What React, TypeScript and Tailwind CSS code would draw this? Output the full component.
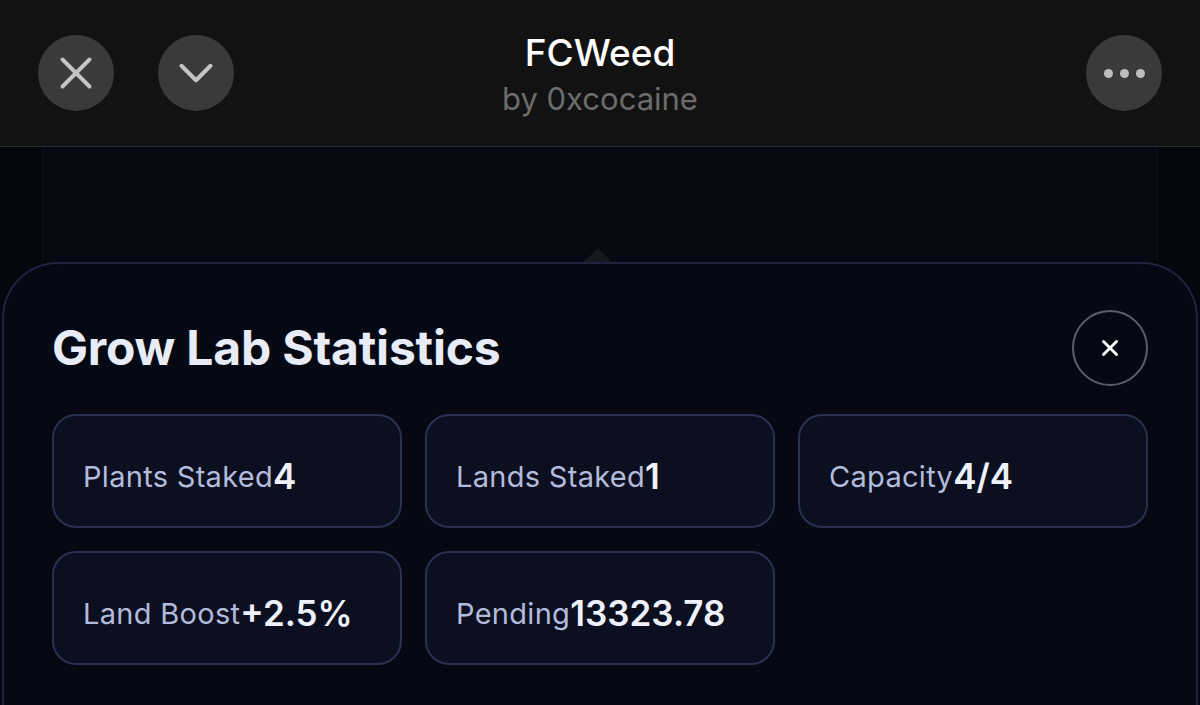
import { X, ChevronDown } from 'lucide-react';

const stats = [
  { label: 'Plants Staked', value: '4' },
  { label: 'Lands Staked', value: '1' },
  { label: 'Capacity', value: '4/4' },
  { label: 'Land Boost', value: '+2.5%' },
  { label: 'Pending', value: '13323.78' },
];

export default function App() {
  return (
    <div
      className="w-[1200px] h-[705px] overflow-hidden bg-[#05070e] flex flex-col"
      style={{ fontFamily: 'Inter, "Noto Sans", sans-serif' }}
    >
      {/* top bar */}
      <div className="h-[147px] shrink-0 bg-[#121212] border-b border-[#2a2b30] flex items-center px-[38px]">
        <div className="flex items-center gap-[44px] w-[300px]">
          <button className="w-[76px] h-[76px] rounded-full bg-[#3a3a3a] flex items-center justify-center text-[#c4c4c4]">
            <X size={54} strokeWidth={1.75} />
          </button>
          <button className="w-[76px] h-[76px] rounded-full bg-[#3a3a3a] flex items-center justify-center text-[#c4c4c4]">
            <ChevronDown size={58} strokeWidth={1.65} />
          </button>
        </div>
        <div className="flex-1 flex flex-col items-center leading-none">
          <div className="text-white text-[37px] font-medium mt-[2px]">FCWeed</div>
          <div className="text-[#6c6c6c] text-[31px] mt-[12px]">by 0xcocaine</div>
        </div>
        <div className="w-[300px] flex justify-end">
          <button className="w-[76px] h-[76px] rounded-full bg-[#3a3a3a] flex items-center justify-center gap-[7px]">
            <span className="w-[9px] h-[9px] rounded-full bg-[#bdbdbd]" />
            <span className="w-[9px] h-[9px] rounded-full bg-[#bdbdbd]" />
            <span className="w-[9px] h-[9px] rounded-full bg-[#bdbdbd]" />
          </button>
        </div>
      </div>

      {/* backdrop area */}
      <div className="h-[115px] shrink-0 px-[42px] flex">
        <div className="flex-1 bg-[#070a13] border-x border-[#0e111b] flex items-end justify-center">
          <div className="w-0 h-0 border-x-[14px] border-x-transparent border-b-[14px] border-b-[#16181f] mr-[4px]" />
        </div>
      </div>

      {/* stats sheet */}
      <div className="flex-1 mx-[2px] rounded-t-[56px] border-t-2 border-x-2 border-[#1e2440] bg-[#060914] px-[48px] pt-[46px]">
        <div className="flex items-center justify-between">
          <h1 className="text-[48px] font-bold text-[#e7ecf8] tracking-[-0.2px] leading-none">
            Grow Lab Statistics
          </h1>
          <button className="w-[76px] h-[76px] rounded-full border-2 border-[#5b5e68] flex items-center justify-center text-white">
            <X size={26} strokeWidth={2.6} />
          </button>
        </div>

        <div className="grid grid-cols-3 gap-x-[23px] gap-y-[23px] mt-[28px]">
          {stats.map(s => (
            <div
              key={s.label}
              className="h-[114px] rounded-[24px] border-2 border-[#2a3150] bg-[#0b0f1f] flex items-center px-[29px] pt-[10px]"
            >
              <span className="text-[29px] text-[#b3bbdc] tracking-[0.3px] leading-none">{s.label}</span>
              <span className="text-[35px] font-semibold text-[#eef1fb] leading-none">{s.value}</span>
            </div>
          ))}
        </div>
      </div>
    </div>
  );
}
